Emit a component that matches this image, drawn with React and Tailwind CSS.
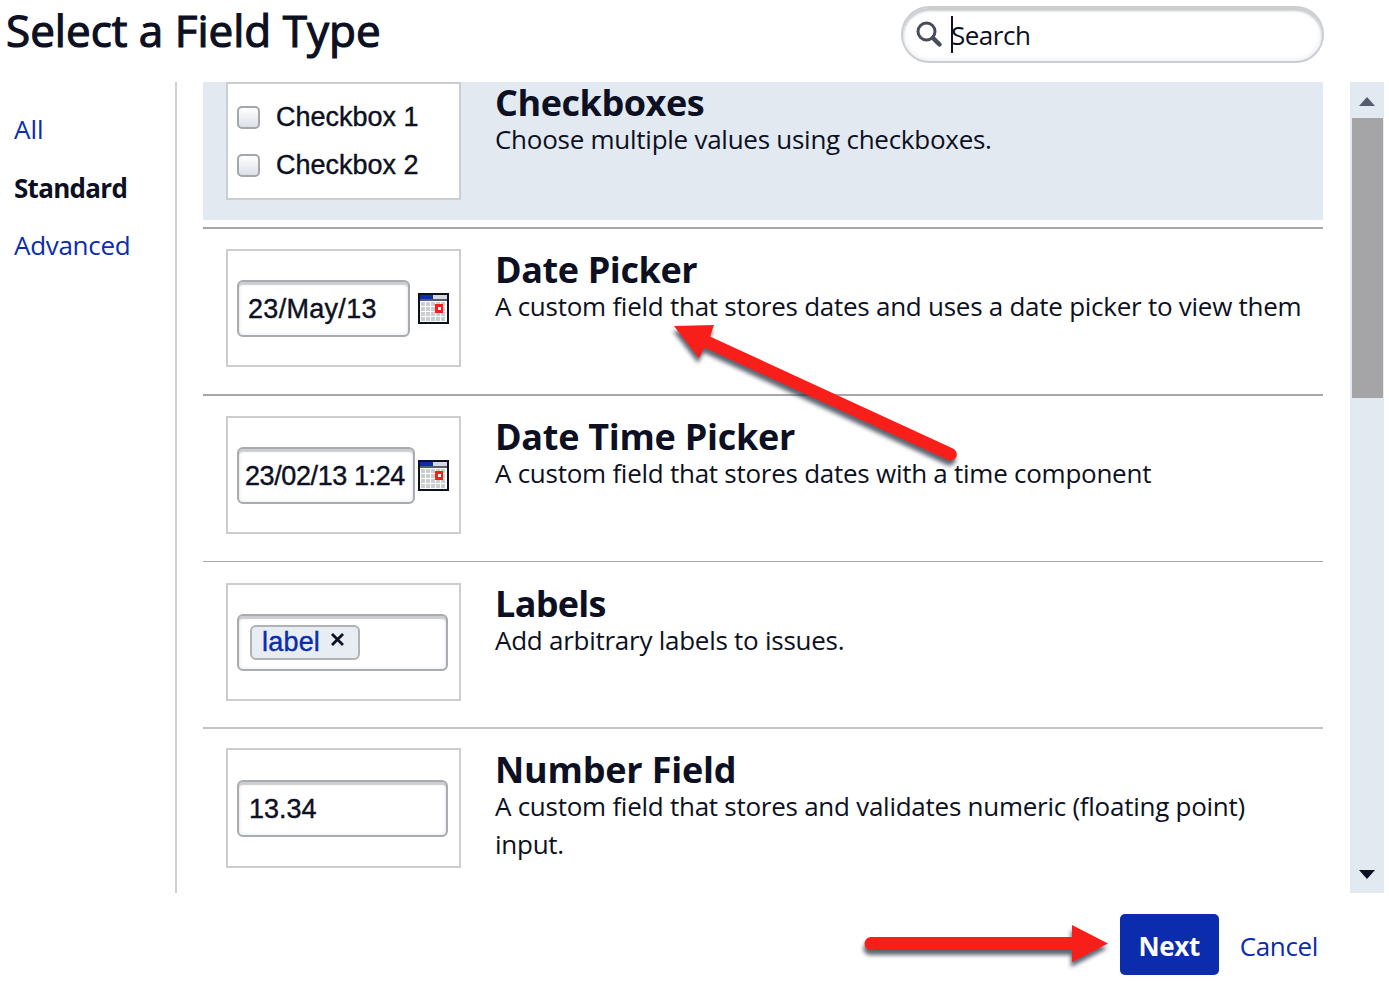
const link = "text-[#0a2cad]";

function Thumb({ className, children }) {
  return (
    <div className={`ml-[23px] w-[235px] shrink-0 border-2 border-[#cbcdcf] bg-white ${className}`}>
      {children}
    </div>
  );
}

function Input({ className, children }) {
  return (
    <div
      className={`flex h-[57px] items-center rounded-[6px] border-2 border-[#a9abae] bg-white pt-[2px] font-['Liberation_Sans',sans-serif] text-[27px] leading-none shadow-[inset_0_3px_1px_#cbcdcf,inset_0_0_4px_#dfe6ef] [-webkit-text-stroke:0.4px] ${className}`}
    >
      {children}
    </div>
  );
}

const GRID = [3, 8, 13, 18, 23];

function Calendar() {
  return (
    <svg width="31" height="31" viewBox="0 0 31 31" shapeRendering="crispEdges">
      <rect width="31" height="31" fill="#0c1022" />
      <rect x="2" y="7" width="27" height="22" fill="#fff" />
      <rect x="2" y="2" width="13" height="4" fill="#0a2cad" />
      <rect x="15" y="2" width="14" height="4" fill="#d5d8dd" />
      <rect x="2" y="6" width="27" height="2" fill="#555d6c" />
      {GRID.slice(1).map((y) =>
        GRID.map((x) => <rect key={`${x}-${y}`} x={x} y={y + 1} width="4" height="4" fill="#cbcdcf" />)
      )}
      <rect x="17" y="11" width="8" height="9" fill="#f81f1b" />
      <rect x="20" y="14" width="3" height="3" fill="#fff" />
    </svg>
  );
}

function Check({ label }) {
  return (
    <label className="flex items-center leading-none">
      <span className="mr-4 h-[23px] w-[23px] rounded-[5px] border-2 border-[#a6a7a9] bg-linear-to-b from-white to-[#dbe1ea]" />
      <span>{label}</span>
    </label>
  );
}

function Info({ title, text, className, tracking = "tracking-[-0.4px]" }) {
  return (
    <div className={`ml-[34px] w-[820px] ${className}`}>
      <h2 className={`text-[36px] leading-[34px] font-bold ${tracking}`}>{title}</h2>
      <p className="text-[26px] leading-[38px] tracking-[-0.26px]">{text}</p>
    </div>
  );
}

export default function App() {
  return (
    <div className="relative h-[981px] w-[1389px] overflow-hidden bg-white font-['Open_Sans','Noto_Sans',sans-serif] text-[#0c1022]">
      <header className="flex h-[82px] justify-between pl-[6px] pr-[65px] pt-[6px]">
        <h1 className="-mt-[2px] text-[44px] leading-[52px] font-medium [-webkit-text-stroke:1.2px]">Select a Field Type</h1>
        <div className="flex h-[57px] w-[423px] items-center rounded-full border-2 border-[#cbcdcf] pl-[13px] shadow-[inset_0_3px_2px_#cbcdcf,inset_0_0_6px_#dfe6ef]">
          <svg width="27" height="27" viewBox="0 0 27 27" fill="none" stroke="#474d5b">
            <circle cx="10.500" cy="10.500" r="8.500" strokeWidth="3" />
            <path d="M17 17L23.500 23.500" strokeWidth="4.500" strokeLinecap="round" />
          </svg>
          <span className="ml-[8px] h-[37px] w-[2px] bg-[#0c1022]" />
          <span className="-ml-[2px] text-[26px] leading-none tracking-[-0.5px]">Search</span>
        </div>
      </header>
      <main className="flex h-[811px]">
        <nav className={`flex w-[177px] flex-col border-r-2 border-[#cdd1d6] pl-[14px] pt-[18px] text-[26px] leading-[58px] ${link}`}>
          <a>All</a>
          <a className="mt-px -mb-px font-bold tracking-[-0.7px] text-[#0c1022]">Standard</a>
          <a className="tracking-[-0.3px]">Advanced</a>
        </nav>
        <section className="ml-[26px] h-[811px] w-[1120px]">
          <article className="flex h-[138px] bg-[#e2e9f1]">
            <Thumb className="flex h-[118px] flex-col gap-[21px] pl-[9px] pt-[20px] font-['Liberation_Sans',sans-serif] text-[27px] [-webkit-text-stroke:0.4px]">
              <Check label="Checkbox 1" />
              <Check label="Checkbox 2" />
            </Thumb>
            <Info className="pt-[4px]" title="Checkboxes" text="Choose multiple values using checkboxes." tracking="tracking-[-0.45px]" />
          </article>
          <article className="mt-[7px] flex h-[167px] border-t-2 border-[#a6a7a9]">
            <Thumb className="mt-[20px] flex h-[118px] items-center pl-[9px]">
              <Input className="w-[173px] pl-[9px] tracking-[0.3px]">23/May/13</Input>
              <span className="ml-[8px]"><Calendar /></span>
            </Thumb>
            <Info className="pt-[24px]" title="Date Picker" text="A custom field that stores dates and uses a date picker to view them" />
          </article>
          <article className="flex h-[167px] border-t-2 border-[#a6a7a9]">
            <Thumb className="mt-[20px] flex h-[118px] items-center pl-[9px]">
              <Input className="w-[178px] pl-[6px] tracking-[-0.4px]">23/02/13 1:24</Input>
              <span className="ml-[3px]"><Calendar /></span>
            </Thumb>
            <Info className="pt-[24px]" title="Date Time Picker" text="A custom field that stores dates with a time component" tracking="tracking-[-0.28px]" />
          </article>
          <article className="flex h-[166px] border-t border-[#a6a7a9]">
            <Thumb className="mt-[21px] flex h-[118px] items-center pl-[9px]">
              <Input className="w-[211px] pl-[11px]">
                <span className={`-mt-[2px] flex h-[35px] w-[110px] items-center rounded-[6px] border-2 border-[#b0b2b5] bg-[#e8edf4] pl-[10px] pt-px tracking-[0.2px] ${link}`}>
                  <span>label</span>
                  <svg className="ml-[10px] -mt-[6px]" width="15" height="15" viewBox="0 0 15 15" stroke="#0c1022" strokeWidth="2.800"><path d="M2 2L13 13M13 2L2 13" /></svg>
                </span>
              </Input>
            </Thumb>
            <Info className="pt-[25px]" title="Labels" text="Add arbitrary labels to issues." tracking="tracking-[-0.7px]" />
          </article>
          <article className="flex h-[166px] border-t-2 border-[#c3c4c6]">
            <Thumb className="mt-[19px] flex h-[120px] items-center pl-[9px]">
              <Input className="w-[211px] pl-[10px]">13.34</Input>
            </Thumb>
            <Info className="pt-[24px]" title="Number Field" text="A custom field that stores and validates numeric (floating point) input." tracking="tracking-[-0.2px]" />
          </article>
        </section>
        <div className="ml-[27px] flex h-[811px] w-[34px] flex-col items-center bg-[#e2e9f1]">
          <svg className="mt-[15px]" width="16" height="9"><path d="M8 0L16 9H0Z" fill="#555d6c" /></svg>
          <div className="mt-[12px] h-[280px] w-[31px] bg-[#a5a5a7]" />
          <svg className="mt-auto mb-[14px]" width="16" height="9"><path d="M0 0H16L8 9Z" fill="#0c1022" /></svg>
        </div>
      </main>
      <footer className="flex items-center justify-end pr-[71px] pt-[21px] text-[26px]">
        <button className="h-[61px] w-[99px] rounded-[5px] bg-[#0a2cad] pt-[3px] font-bold tracking-[-0.4px] text-white">Next</button>
        <a className={`ml-[21px] pt-[3px] tracking-[-0.35px] ${link}`}>Cancel</a>
      </footer>
      <svg className="pointer-events-none absolute inset-0 drop-shadow-[-1px_5px_2px_rgba(40,48,64,0.75)]" width="1389" height="981" fill="#f81f1b">
        <path d="M674 326L714 325L710 336.500L953 448.500A6 6 0 0 1 948 460L704.500 347.500L699 358Z" />
        <path d="M871 937H1072V925L1108 943.500L1072 962V950H871A6.500 6.500 0 0 1 871 937Z" />
      </svg>
    </div>
  );
}
